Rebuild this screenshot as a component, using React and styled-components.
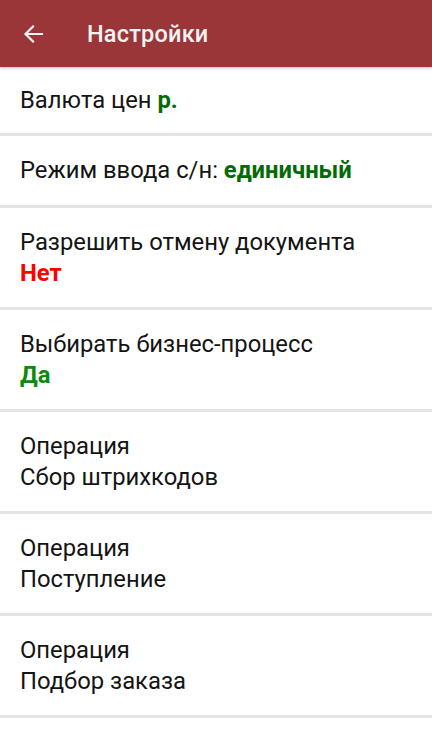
import React from 'react';
import styled, { createGlobalStyle } from 'styled-components';

const GlobalStyle = createGlobalStyle`
  html, body {
    margin: 0;
    padding: 0;
    background: #ffffff;
    font-family: Roboto, "Noto Sans", sans-serif;
  }
`;

const Screen = styled.div`
  width: 432px;
  min-height: 739px;
  background: #ffffff;
  overflow: hidden;
`;

const Toolbar = styled.header`
  position: relative;
  z-index: 1;
  height: 67px;
  display: flex;
  align-items: center;
  background: #9b3638;
  box-shadow: 0 1px 3px rgba(0, 0, 0, 0.25);
`;

const BackButton = styled.button`
  width: 68px;
  height: 67px;
  padding: 0 2px 0 0;
  border: 0;
  background: transparent;
  display: flex;
  align-items: center;
  justify-content: center;
  cursor: pointer;
`;

const Title = styled.h1`
  margin: 0 0 0 19px;
  font-size: 23.5px;
  font-weight: 500;
  color: #f2f2f2;
  letter-spacing: 0.2px;
`;

const List = styled.ul`
  list-style: none;
  margin: 0;
  padding: 0;
`;

const Row = styled.li`
  box-sizing: border-box;
  height: ${(p) => p.$height}px;
  padding: 0 20px;
  display: flex;
  flex-direction: column;
  justify-content: center;
  border-bottom: 3px solid #e4e4e4;
  font-size: 23.8px;
  line-height: 31px;
  color: #141414;
`;

const Value = styled.span`
  font-weight: 700;
  color: ${(p) => p.$color};
`;

const ArrowLeft = () => (
  <svg width="24" height="24" viewBox="0 0 24 24" fill="none">
    <path d="M21 12H5M12 4.5L4.5 12l7.5 7.5" stroke="#f5f5f5" strokeWidth="2.2" strokeLinecap="square" />
  </svg>
);

const GREEN_DARK = '#036b06';
const GREEN = '#0a8c0a';
const RED = '#ff0000';

const settings = [
  { label: 'Валюта цен', value: 'р.', color: GREEN_DARK, inline: true, height: 69 },
  { label: 'Режим ввода с/н:', value: 'единичный', color: GREEN_DARK, inline: true, height: 72 },
  { label: 'Разрешить отмену документа', value: 'Нет', color: RED, height: 102 },
  { label: 'Выбирать бизнес-процесс', value: 'Да', color: GREEN, height: 102 },
  { label: 'Операция', text: 'Сбор штрихкодов', height: 102 },
  { label: 'Операция', text: 'Поступление', height: 102 },
  { label: 'Операция', text: 'Подбор заказа', height: 102 },
];

const App = () => {
  return (
    <Screen>
      <GlobalStyle />
      <Toolbar>
        <BackButton aria-label="Назад">
          <ArrowLeft />
        </BackButton>
        <Title>Настройки</Title>
      </Toolbar>
      <List>
        {settings.map((s, i) => (
          <Row key={i} $height={s.height}>
            {s.inline ? (
              <div>
                {s.label} <Value $color={s.color}>{s.value}</Value>
              </div>
            ) : (
              <>
                <div>{s.label}</div>
                {s.text ? <div>{s.text}</div> : <Value $color={s.color}>{s.value}</Value>}
              </>
            )}
          </Row>
        ))}
      </List>
    </Screen>
  );
};

export default App;
